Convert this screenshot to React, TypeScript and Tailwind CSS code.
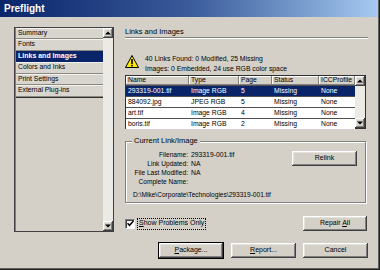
import React from "react";

const raised =
  "bg-[#d4d0c8] shadow-[inset_-1px_-1px_#404040,inset_1px_1px_#ffffff,inset_-2px_-2px_#808080,inset_2px_2px_#e4e2dc]";

function Btn({
  w,
  children,
  def,
}: {
  w: string;
  children: React.ReactNode;
  def?: boolean;
}) {
  return (
    <div
      className={`${w} h-[15px] flex items-center justify-center text-[7px] text-black ${raised} ${
        def ? "outline outline-1 outline-black" : ""
      }`}
    >
      {children}
    </div>
  );
}

function Arrow({ up }: { up?: boolean }) {
  return (
    <div className={`w-[10px] h-[10px] flex items-center justify-center ${raised}`}>
      <svg width="6" height="4" viewBox="0 0 6 4">
        {up ? (
          <polygon points="0,3.5 3,0.5 6,3.5" fill="#000" />
        ) : (
          <polygon points="0,0.5 3,3.5 6,0.5" fill="#000" />
        )}
      </svg>
    </div>
  );
}

const listItems = [
  { t: "Summary", h: "h-[11px]" },
  { t: "Fonts", h: "h-[12px]" },
  { t: "Links and Images", h: "h-[11px]", sel: true },
  { t: "Colors and Inks", h: "h-[12px]" },
  { t: "Print Settings", h: "h-[11px]" },
  { t: "External Plug-ins", h: "h-[12px]" },
];

const rows = [
  ["293319-001.tif", "Image RGB", "5", "Missing", "None"],
  ["884092.jpg", "JPEG RGB", "5", "Missing", "None"],
  ["art.tif", "Image RGB", "4", "Missing", "None"],
  ["boris.tif", "Image RGB", "2", "Missing", "None"],
];
const colW = ["w-[63px]", "w-[50px]", "w-[33px]", "w-[47px]", "w-[36px]"];
const heads = ["Name", "Type", "Page", "Status", "ICCProfile"];

export default function App() {
  return (
    <div
      className="w-[380px] h-[270px] bg-[#d4d0c8] flex flex-col text-black shadow-[inset_-1px_-1px_#202020,inset_-2px_-2px_#606060]"
      style={{ fontFamily: "'Liberation Sans', Arial, sans-serif" }}
    >
      {/* title bar */}
      <div className="h-[17px] mr-[2px] flex items-center pl-[4px] bg-gradient-to-r from-[#0a246a] via-[#3a5a9a] to-[#a6caf0]">
        <span className="text-white font-bold text-[10px] leading-none">Preflight</span>
      </div>

      <div className="flex pl-[14px] pt-[10px]">
        {/* left list */}
        <div className="w-[100px] h-[205px] border-t border-l border-[#404040] border-r border-b border-r-[#404040] border-b-[#404040] shadow-[inset_1px_1px_#808080] flex">
          <div className="flex-1 flex flex-col pt-[0px] pl-[1px]">
            {listItems.map((it) => (
              <div
                key={it.t}
                className={`${it.h} flex items-center pl-[2px] border-b ${
                  it.sel
                    ? "bg-[#0a246a] text-white font-bold text-[7px] border-[#0a246a]"
                    : "bg-[#d8d5ce] text-[6.8px] border-[#8a8880] shadow-[inset_0_1px_#f4f2ee]"
                }`}
              >
                {it.t}
              </div>
            ))}
            <div className="h-[1px] bg-[#303030]" />
          </div>
          <div className="w-[10px] flex flex-col bg-[#eceae4]">
            <Arrow up />
            <div className="flex-1" />
            <Arrow />
          </div>
        </div>

        {/* right column */}
        <div className="ml-[11px] w-[243px] flex flex-col">
          <div className="h-[10px] leading-[10px] text-[7.5px]">Links and Images</div>
          <div className="h-[2px] border-t border-[#808080] border-b border-b-white" />

          {/* warning */}
          <div className="mt-[15px] flex h-[20px]">
            <svg width="14" height="13" viewBox="0 0 14 13" className="mt-[1px]">
              <polygon points="7,0.5 13.5,12.5 0.5,12.5" fill="#ffe600" stroke="#000" strokeWidth="1" />
              <rect x="6.2" y="4" width="1.6" height="5" fill="#000" />
              <rect x="6.2" y="9.8" width="1.6" height="1.6" fill="#000" />
            </svg>
            <div className="ml-[6px] flex flex-col text-[6.8px] leading-[10px]">
              <div>40 Links Found: 0 Modified, 25 Missing</div>
              <div>Images: 0 Embedded, 24 use RGB color space</div>
            </div>
          </div>

          {/* table */}
          <div className="mt-[1px] w-[241px] h-[54px] border border-[#303030] bg-white flex">
            <div className="w-[229px] flex flex-col">
              <div className="h-[9px] flex">
                {heads.map((h, i) => (
                  <div
                    key={h}
                    className={`${colW[i]} h-[9px] flex items-center pl-[2px] text-[6.8px] bg-[#d4d0c8] shadow-[inset_-1px_-1px_#808080,inset_1px_1px_#ffffff]`}
                  >
                    {h}
                  </div>
                ))}
              </div>
              {rows.map((r, ri) => (
                <div
                  key={r[0]}
                  className={`h-[11px] flex border-t border-[#505050] ${
                    ri === 0 ? "bg-[#0a246a] text-white" : "bg-white"
                  }`}
                >
                  {r.map((c, ci) => (
                    <div key={ci} className={`${colW[ci]} flex items-center pl-[2px] text-[6.8px]`}>
                      {c}
                    </div>
                  ))}
                </div>
              ))}
            </div>
            <div className="w-[10px] flex flex-col bg-[#eceae4]">
              <Arrow up />
              <div className="flex-1" />
              <Arrow />
            </div>
          </div>

          {/* group box */}
          <div className="mt-[12px] w-[241px] h-[62px] relative border border-[#808080] shadow-[1px_1px_#ffffff,inset_1px_1px_#ffffff] flex flex-col">
            <div className="absolute left-[6px] top-[-6px] px-[2px] bg-[#d4d0c8] text-[7.5px] leading-[10px]">
              Current Link/Image
            </div>
            <div className="flex pt-[8px]">
              <div className="w-[62px] flex flex-col text-right text-[6.6px] leading-[9px]">
                <div>Filename:</div>
                <div>Link Updated:</div>
                <div>File Last Modified:</div>
                <div>Complete Name:</div>
              </div>
              <div className="ml-[3px] flex flex-col text-[6.8px] leading-[9px]">
                <div>293319-001.tif</div>
                <div>NA</div>
                <div>NA</div>
              </div>
              <div className="ml-auto mr-[8px] mt-[1px]">
                <Btn w="w-[65px]">Relink</Btn>
              </div>
            </div>
            <div className="pl-[7px] mt-[4px] text-[6.6px] leading-[9px]">
              D:\Mike\Corporate\Technologies\293319-001.tif
            </div>
          </div>

          {/* checkbox row */}
          <div className="mt-[14px] w-[242px] h-[13px] flex items-center">
            <div className="w-[10px] h-[10px] bg-white border-t border-l border-[#808080] border-r border-b border-r-white border-b-white shadow-[inset_1px_1px_#404040] flex items-center justify-center">
              <svg width="7" height="7" viewBox="0 0 7 7">
                <polyline points="0.5,3.2 2.5,5.3 6.5,1" fill="none" stroke="#000" strokeWidth="1.5" />
              </svg>
            </div>
            <div className="ml-[2px] h-[12px] px-[1px] flex items-center border border-dotted border-black text-[7px]">
              <span>
                <span className="underline">S</span>how Problems Only
              </span>
            </div>
            <div className="ml-auto">
              <Btn w="w-[64px]">
                <span>
                  Repair <span className="underline">A</span>ll
                </span>
              </Btn>
            </div>
          </div>

          {/* bottom buttons */}
          <div className="mt-[13px] flex justify-end">
            <Btn w="w-[64px]" def>
              <span>
                <span className="underline">P</span>ackage...
              </span>
            </Btn>
            <div className="ml-[8px]">
              <Btn w="w-[65px]">
                <span>
                  <span className="underline">R</span>eport...
                </span>
              </Btn>
            </div>
            <div className="ml-[7px]">
              <Btn w="w-[65px]">Cancel</Btn>
            </div>
          </div>
        </div>
      </div>
    </div>
  );
}
